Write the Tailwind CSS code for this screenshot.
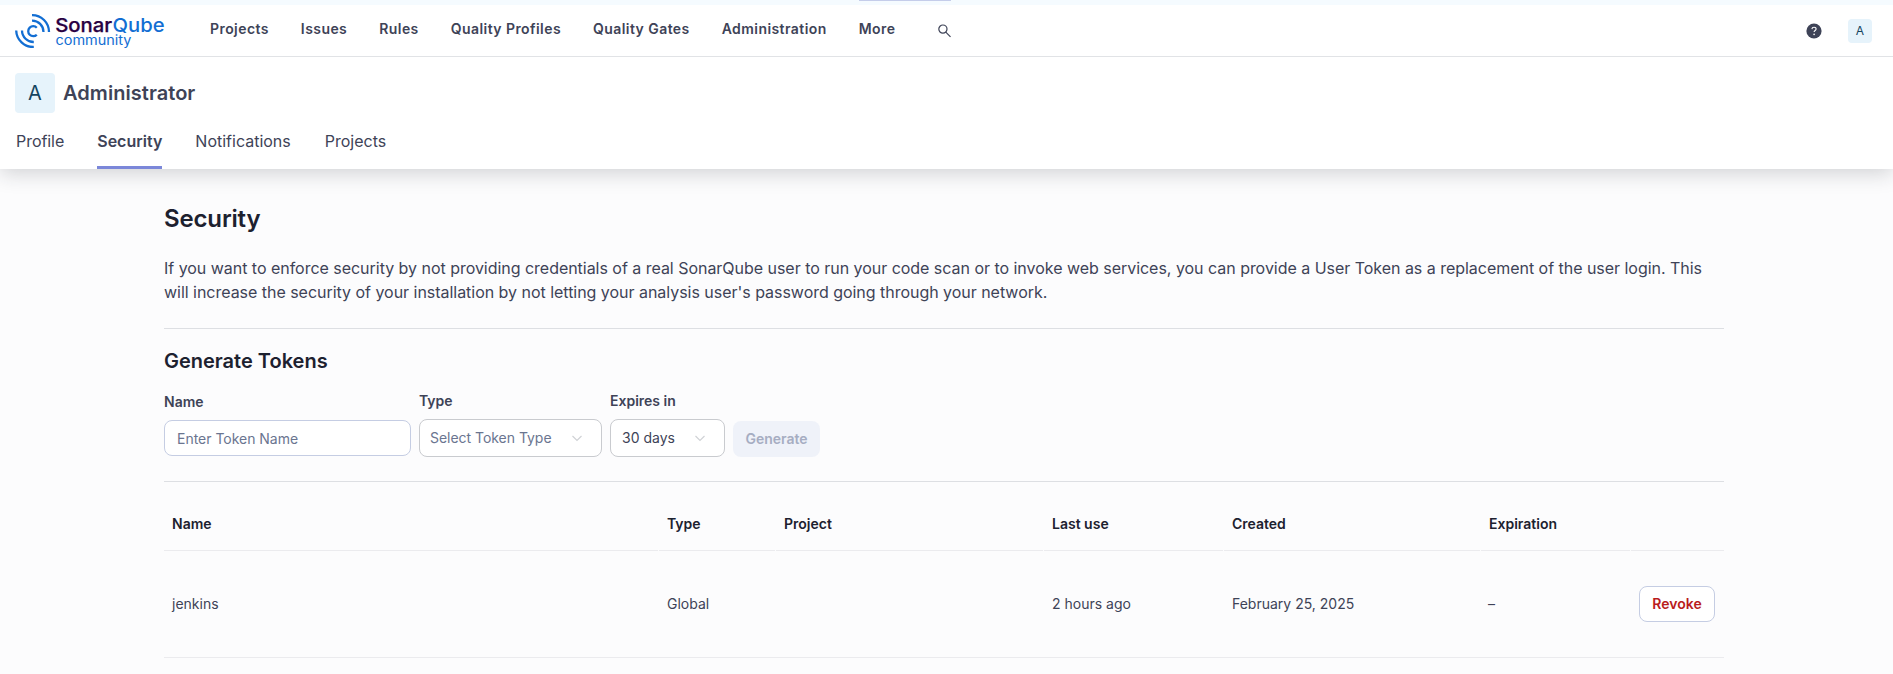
<!DOCTYPE html>
<html lang="en">
<head>
<meta charset="utf-8">
<title>Security - Administrator</title>
<script src="https://cdn.jsdelivr.net/npm/@tailwindcss/browser@4"></script>
</head>
<body class="h-[674px] overflow-hidden bg-[#fcfcfd] font-['Inter',sans-serif] text-sm text-[#3e4357]">
<div class="relative z-10 bg-white shadow-[0_4px_20px_rgba(29,33,47,0.2)]">
  <header class="flex h-[57px] flex-col border-b border-[#e1e3e6]">
    <div class="h-[5px] bg-[#f5fbff]"><div class="ml-[859px] h-px w-[92px] bg-[#c5cdea]"></div></div>
    <div class="flex h-[51px] items-center pl-[15px] pr-[21px]">
      <svg class="-mt-[3px] h-[38px] w-[152px] shrink-0" viewBox="0 0 152 38">
        <g fill="none" stroke="#126ed3" stroke-width="2.300">
          <path d="M17 5.2A16.8 16.8 0 0 1 34 22"/>
          <path d="M17 10.6A11.3 11.3 0 0 1 28.500 22"/>
          <path d="M21.800 17.700A5 5 0 1 0 21.800 24.700"/>
          <path d="M1.200 20.500A17 17 0 0 0 18.800 37"/>
          <path d="M7 20.500A11.600 11.600 0 0 0 18.800 32"/>
        </g>
        <text x="40.200" y="22" textLength="57" lengthAdjust="spacingAndGlyphs" font-family="Inter" font-size="19" font-weight="500" stroke="#290042" stroke-width=".25" fill="#290042">Sonar</text>
        <text x="97.500" y="22" textLength="52" lengthAdjust="spacingAndGlyphs" font-family="Inter" font-size="19" font-weight="500" fill="#126ed3">Qube</text>
        <text x="40.500" y="35.200" textLength="76" lengthAdjust="spacingAndGlyphs" font-family="Inter" font-size="13.500" fill="#126ed3">community</text>
      </svg>
      <nav class="-mt-[3px] ml-[43px] flex gap-8 font-semibold tracking-[0.43px]">
        <a>Projects</a><a>Issues</a><a>Rules</a><a>Quality Profiles</a><a>Quality Gates</a><a>Administration</a><a>More</a>
      </nav>
      <svg class="ml-[42px] h-4 w-4" viewBox="0 0 16 16" fill="none" stroke="#3e4357" stroke-width="1.200"><circle cx="5.900" cy="6.100" r="4.100"/><path d="M8.800 9.100L13.500 13.900"/></svg>
      <svg class="ml-auto mt-px h-4 w-4" viewBox="0 0 16 16"><circle cx="8" cy="8" r="7.600" fill="#3e4357"/><path d="M5.900 6.100C6 4.700 7 4.200 8 4.200c1.200 0 2.100.7 2.100 1.800 0 1.500-2 1.500-2 3.100" fill="none" stroke="#fff" stroke-width="1.100"/><circle cx="8.100" cy="11.400" r=".8" fill="#fff"/></svg>
      <div class="mt-px ml-[26px] flex size-6 items-center justify-center rounded bg-[#e6f3fb] text-xs text-[#15445f]">A</div>
    </div>
  </header>
  <div class="h-28 px-[15px] pt-4">
    <div class="flex items-center gap-2">
      <div class="flex size-10 items-center justify-center rounded bg-[#e6f3fb] text-xl text-[#15445f]">A</div>
      <h1 class="text-xl font-semibold tracking-[0.05px]">Administrator</h1>
    </div>
    <div class="mt-4 ml-px flex h-10 gap-[33px] text-base leading-6">
      <a class="tracking-[-0.05px]">Profile</a>
      <a class="border-b-[3px] border-[#7b87d9] font-semibold">Security</a>
      <a>Notifications</a><a class="ml-px">Projects</a>
    </div>
  </div>
</div>
<main class="ml-[164px] w-[1560px] pt-8">
  <h2 class="h-8 pt-[2px] text-2xl leading-8 font-semibold tracking-[-0.15px] text-[#1d212f]">Security</h2>
  <p class="mt-[23px] text-base leading-6 tracking-[-0.029px]">If you want to enforce security by not providing credentials of a real SonarQube user to run your code scan or to invoke web services, you can provide a User Token as a replacement of the user login. This will increase the security of your installation by not letting your analysis user's password going through your network.</p>
  <hr class="mt-6 border-[#dddfe3]">
  <h3 class="mt-[18px] text-xl leading-7 font-semibold text-[#1d212f]">Generate Tokens</h3>
  <div class="mt-[15px] flex h-[67px] items-end gap-2">
    <div class="mb-px w-[247px]">
      <label class="block pb-2 font-semibold leading-5">Name</label>
      <input class="block h-9 w-full rounded-lg border border-[#c5cde3] bg-white px-3 tracking-[-0.02px] placeholder:text-[#6a7590] placeholder:opacity-100" placeholder="Enter Token Name">
    </div>
    <div class="w-[183px]">
      <label class="block pb-2 font-semibold leading-5">Type</label>
      <div class="flex h-[38px] items-center justify-between rounded-lg border border-[#c9cbcf] bg-white pr-[18px] pl-[10px] tracking-[-0.03px] text-[#6a7590]">Select Token Type
        <svg class="h-3 w-3" viewBox="0 0 12 12" fill="none" stroke="#d0d2d6" stroke-width="1.200"><path d="M1.500 4L6 8.500L10.500 4"/></svg></div>
    </div>
    <div class="w-[115px]">
      <label class="block pb-2 font-semibold leading-5">Expires in</label>
      <div class="flex h-[38px] items-center justify-between rounded-lg border border-[#c9cbcf] bg-white pr-[18px] pl-[11px]">30 days
        <svg class="h-3 w-3" viewBox="0 0 12 12" fill="none" stroke="#d0d2d6" stroke-width="1.200"><path d="M1.500 4L6 8.500L10.500 4"/></svg></div>
    </div>
    <button class="h-9 w-[87px] rounded-lg bg-[#eff2f9] font-semibold text-[#a6adc2]">Generate</button>
  </div>
  <hr class="mt-6 border-[#dddfe3]">
  <div class="grid grid-cols-[494px_116px_267px_179px_256px_149px_93px] gap-px">
    <div class="contents font-semibold text-[#1d212f] [&>div]:h-[69px] [&>div]:border-b [&>div]:border-[#ebebee] [&>div]:px-2 [&>div]:pt-8 [&>div]:leading-5">
      <div>Name</div><div>Type</div><div>Project</div><div>Last use</div><div>Created</div><div>Expiration</div><div></div>
    </div>
  </div>
  <div class="grid h-[107px] grid-cols-[495px_117px_268px_180px_256px_150px_94px] items-center border-b border-[#ebebee] [&>div]:pl-2">
    <div>jenkins</div><div>Global</div><div></div><div>2 hours ago</div><div>February 25, 2025</div><div>–</div>
    <button class="ml-[9px] h-9 w-[76px] rounded-lg border border-[#c5cde3] bg-white font-semibold text-[#b91c1c]">Revoke</button>
  </div>
</main>
</body>
</html>
